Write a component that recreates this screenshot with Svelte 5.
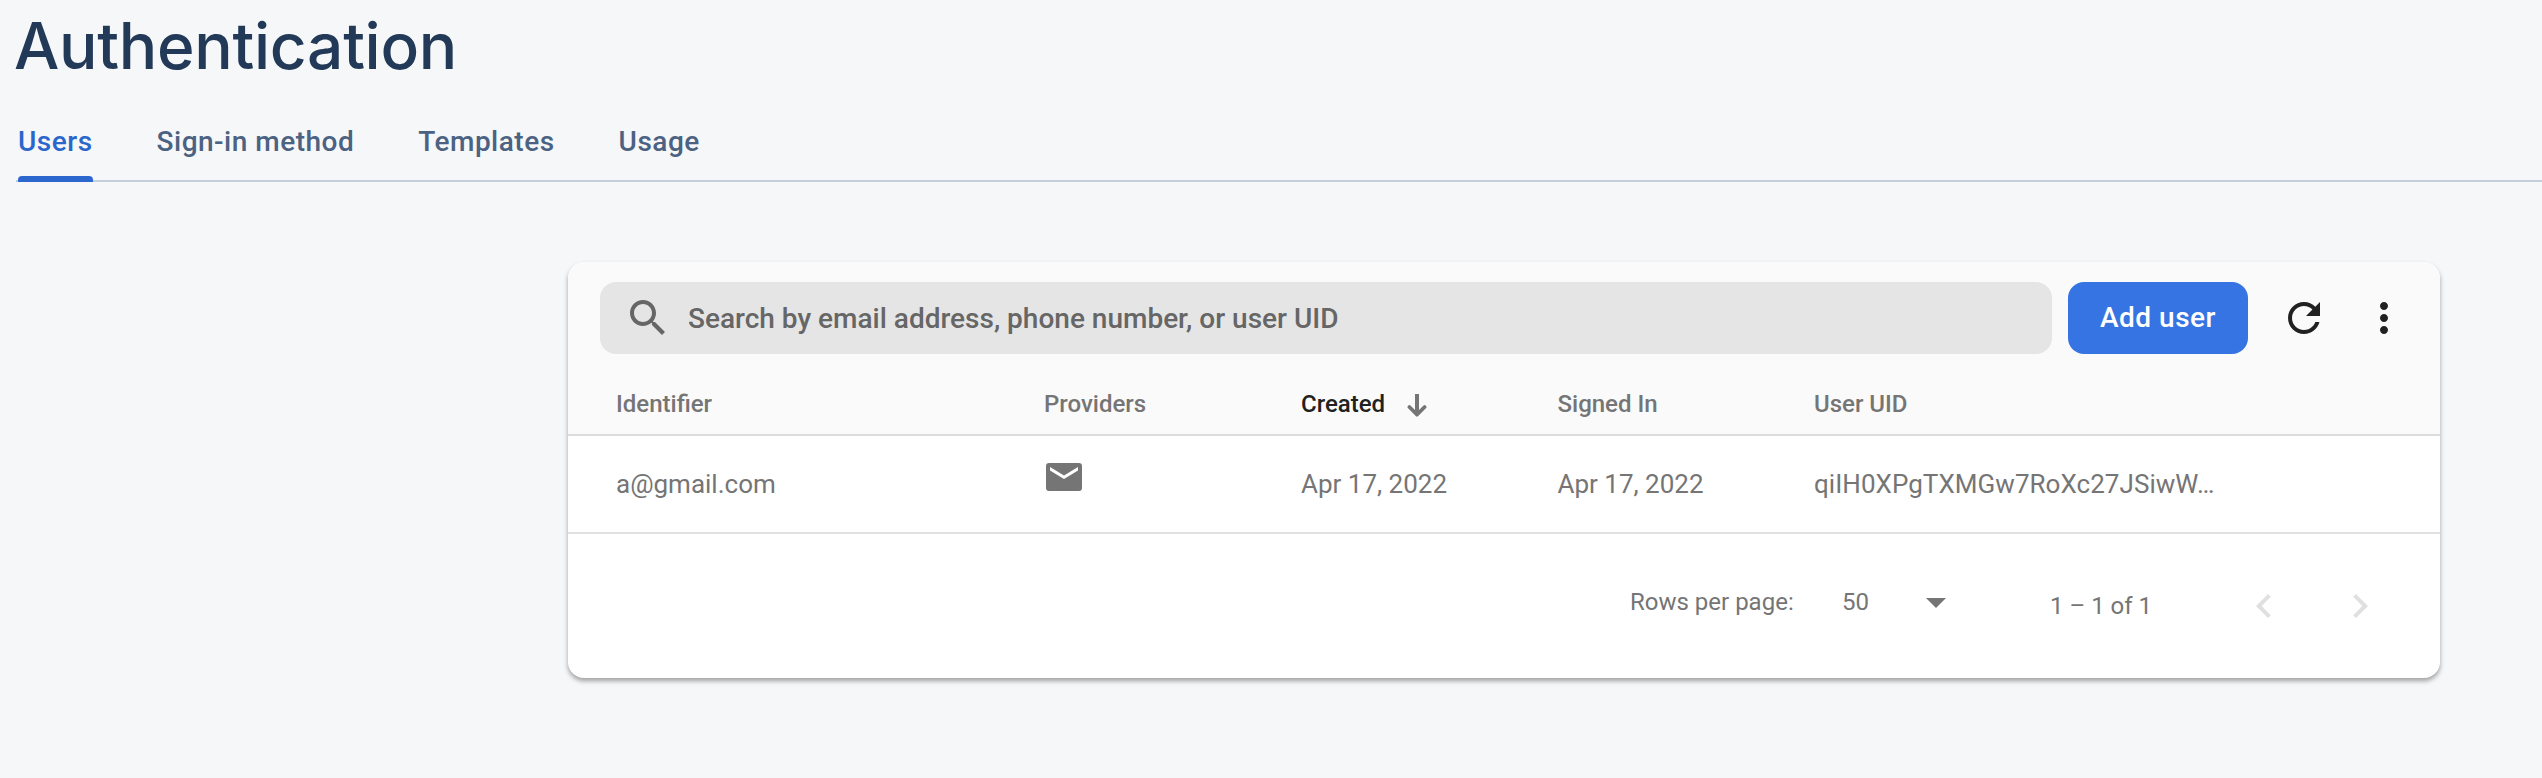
<script>
  const tabs = ['Users', 'Sign-in method', 'Templates', 'Usage'];
  const columns = ['Identifier', 'Providers', 'Created', 'Signed In', 'User UID'];
  const users = [
    { id: 'a@gmail.com', created: 'Apr 17, 2022', signedIn: 'Apr 17, 2022', uid: 'qiIH0XPgTXMGw7RoXc27JSiwW…' },
  ];
</script>

<main>
  <h1>Authentication</h1>

  <nav>
    {#each tabs as tab, i}
      <a class:active={i === 0} href="#{tab}">{tab}</a>
    {/each}
  </nav>

  <section class="card">
    <header>
      <div class="toolbar">
        <label class="search">
          <svg viewBox="0 0 24 24"><path d="M15.5 14h-.79l-.28-.27C15.41 12.59 16 11.11 16 9.5 16 5.91 13.09 3 9.5 3S3 5.91 3 9.5 5.91 16 9.5 16c1.61 0 3.09-.59 4.23-1.57l.27.28v.79l5 4.99L20.49 19l-4.99-5zm-6 0C7.01 14 5 11.99 5 9.5S7.01 5 9.5 5 14 7.01 14 9.5 11.99 14 9.5 14z" /></svg>
          <span>Search by email address, phone number, or user UID</span>
        </label>
        <button class="add"><span>Add user</span></button>
        <button class="icon" aria-label="Refresh">
          <svg viewBox="0 0 24 24"><path d="M17.65 6.35C16.2 4.9 14.21 4 12 4c-4.42 0-7.99 3.58-7.99 8s3.57 8 7.99 8c3.73 0 6.84-2.55 7.73-6h-2.08c-.82 2.33-3.04 4-5.65 4-3.31 0-6-2.69-6-6s2.69-6 6-6c1.66 0 3.14.69 4.22 1.78L13 11h7V4l-2.35 2.35z" /></svg>
        </button>
        <button class="icon" aria-label="More">
          <svg viewBox="0 0 24 24"><path d="M12 8c1.1 0 2-.9 2-2s-.9-2-2-2-2 .9-2 2 .9 2 2 2zm0 2c-1.1 0-2 .9-2 2s.9 2 2 2 2-.9 2-2-.9-2-2-2zm0 6c-1.1 0-2 .9-2 2s.9 2 2 2 2-.9 2-2-.9-2-2-2z" /></svg>
        </button>
      </div>
      <div class="row heads">
        {#each columns as column}
          <div class:sorted={column === 'Created'}>
            <span>{column}</span>
            {#if column === 'Created'}
              <svg class="sort" viewBox="0 0 20 23"><path d="M8 0h4v16l4.300-4.300a1.700 1.700 0 0 1 2.600 2.600L11 22.200a1.500 1.500 0 0 1-2 0L1.100 14.300a1.700 1.700 0 0 1 2.600-2.600L8 16z" /></svg>
            {/if}
          </div>
        {/each}
      </div>
    </header>

    {#each users as user}
      <div class="row user">
        <div>{user.id}</div>
        <div>
          <svg class="mail" viewBox="0 0 36 28"><path fill-rule="evenodd" d="M3 0h30a3 3 0 0 1 3 3v22a3 3 0 0 1-3 3H3a3 3 0 0 1-3-3V3a3 3 0 0 1 3-3zM4 4v3.500l14 8.500 14-8.500V4l-14 8.500z" /></svg>
        </div>
        <div>{user.created}</div>
        <div>{user.signedIn}</div>
        <div class="uid">{user.uid}</div>
      </div>
    {/each}

    <footer>
      <span class="label">Rows per page:</span>
      <span class="size">50 <svg viewBox="0 0 20 10"><path d="M0 0h20L10 10z" /></svg></span>
      <span class="range">1 – 1 of 1</span>
      <svg class="chev" viewBox="0 0 24 24"><path d="M15.41 7.41L14 6l-6 6 6 6 1.410-1.410L10.830 12z" /></svg>
      <svg class="chev" viewBox="0 0 24 24"><path d="M10 6L8.590 7.410 13.170 12l-4.580 4.590L10 18l6-6z" /></svg>
    </footer>
  </section>
</main>

<style>
  :global(body) {
    background: #f6f7f9;
  }
  main {
    height: 778px;
    overflow: hidden;
    font-family: Roboto, sans-serif;
  }
  svg {
    display: block;
    flex: none;
    fill: currentColor;
  }
  h1 {
    margin: 0 0 0 14px;
    padding-top: 6px;
    height: 102px;
    font: 500 64px/80px Inter, sans-serif;
    letter-spacing: -0.3px;
    color: #223a58;
    box-sizing: border-box;
  }
  nav {
    display: flex;
    gap: 64px;
    height: 80px;
    box-sizing: border-box;
    margin-left: 16px;
    padding-left: 2px;
    background: linear-gradient(#c4cedd, #c4cedd) bottom / 100% 2px no-repeat;
  }
  nav a {
    box-sizing: border-box;
    height: 80px;
    padding-top: 20px;
    font-size: 28px;
    font-weight: 500;
    line-height: 40px;
    letter-spacing: 0.5px;
    color: #4b6282;
    text-decoration: none;
    position: relative;
  }
  nav a.active {
    color: #2b66cb;
  }
  nav a.active::after {
    content: '';
    position: absolute;
    left: 0;
    right: 0;
    bottom: 0;
    height: 6px;
    border-radius: 4px 4px 0 0;
    background: #2c67cf;
  }
  .card {
    width: 1872px;
    height: 416px;
    margin: 80px 0 0 568px;
    border-radius: 16px;
    background: #fff;
    box-shadow: 0 3px 4px rgba(0, 0, 0, 0.27), 0 3px 6px rgba(0, 0, 0, 0.1);
    color: #757575;
  }
  header {
    height: 174px;
    box-sizing: border-box;
    padding-top: 20px;
    border-radius: 16px 16px 0 0;
    border-bottom: 2px solid #dcdcdc;
    background: #fafafa;
  }
  .toolbar {
    display: flex;
    align-items: center;
    height: 72px;
    padding-left: 32px;
  }
  .search {
    display: flex;
    flex: none;
    align-items: center;
    gap: 16px;
    width: 1452px;
    height: 72px;
    box-sizing: border-box;
    padding-left: 24px;
    border-radius: 16px;
    background: #e5e5e5;
    color: #666;
    font-size: 28px;
    font-weight: 500;
  }
  .search svg,
  .icon svg {
    width: 48px;
    height: 48px;
  }
  button {
    flex: none;
    border: 0;
    padding: 0;
    font-family: inherit;
    background: none;
  }
  .add {
    width: 180px;
    height: 72px;
    margin: 0 16px;
    border-radius: 16px;
    background: #3574e2;
    color: #fff;
    font-size: 28px;
    font-weight: 500;
    letter-spacing: 0.5px;
  }
  .add span {
    display: block;
    margin-bottom: 2px;
  }
  .icon {
    width: 80px;
    height: 80px;
    padding: 16px;
    box-sizing: border-box;
    color: #212121;
  }
  .row {
    display: grid;
    grid-template-columns: 428px 257px 256.500px 256.500px 1fr;
    align-items: center;
    padding: 0 48px;
  }
  .heads {
    height: 80px;
    padding-top: 20px;
    box-sizing: border-box;
    font-size: 24px;
    font-weight: 500;
  }
  .heads div {
    display: flex;
    align-items: center;
  }
  .sorted span {
    color: #212121;
  }
  .sort {
    width: 20px;
    height: 23px;
    margin: 2px 0 0 22px;
  }
  .user {
    height: 98px;
    box-sizing: border-box;
    border-bottom: 2px solid #e0e0e0;
    font-size: 26px;
  }
  .uid {
    letter-spacing: 0.05px;
  }
  .mail {
    width: 36px;
    height: 28px;
    margin: 0 0 14px 2px;
  }
  footer {
    display: flex;
    align-items: center;
    height: 144px;
    box-sizing: border-box;
    padding-left: 1062px;
    font-size: 24px;
  }
  .label {
    width: 212px;
    margin-bottom: 8px;
  }
  .size {
    display: flex;
    align-items: center;
    justify-content: space-between;
    width: 104px;
    margin-bottom: 8px;
  }
  .size svg {
    width: 20px;
    height: 10px;
    margin-top: 2px;
  }
  .range {
    width: 190px;
    margin-left: 104px;
  }
  .chev {
    width: 48px;
    height: 48px;
    color: #e0e0e0;
  }
  .chev + .chev {
    margin-left: 48px;
  }
</style>
